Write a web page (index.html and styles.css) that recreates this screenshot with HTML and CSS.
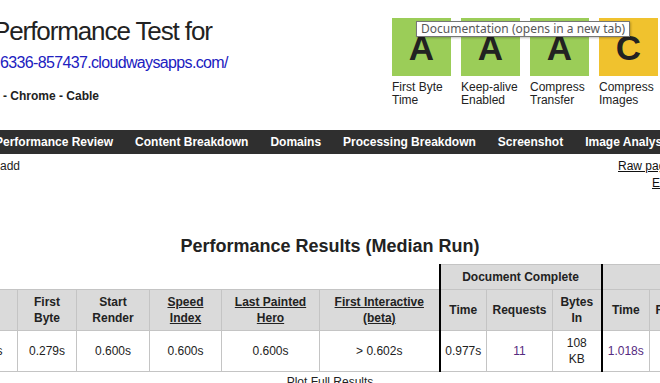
FILE: index.html
```html
<!DOCTYPE html>
<html lang="en">
<head>
    <meta charset="UTF-8">
    <meta name="viewport" content="width=device-width, initial-scale=1.0">
    <title>WebPageTest Test Result</title>
    <link rel="stylesheet" href="styles.css">
</head>
<body>

    <div class="page">
        <div class="header">
            <div class="test-info">
                <h1>Performance Test for</h1>
                <a class="test-url" href="#">6336-857437.cloudwaysapps.com/</a>
                <p class="test-config">- Chrome - Cable</p>
            </div>
            <ul class="grades">
                <li><a class="grade grade-a" href="#">A</a><span>First Byte<br>Time</span></li>
                <li><a class="grade grade-a" href="#">A</a><span>Keep-alive<br>Enabled</span></li>
                <li><a class="grade grade-a" href="#">A</a><span>Compress<br>Transfer</span></li>
                <li><a class="grade grade-c" href="#">C</a><span>Compress<br>Images</span></li>
                <li><a class="grade grade-f" href="#">F</a><span>Cache<br>static content</span></li>
            </ul>
        </div>

        <div class="tooltip">Documentation (opens in a new tab)</div>

        <ul class="nav">
            <li>Performance Review</li>
            <li>Content Breakdown</li>
            <li>Domains</li>
            <li>Processing Breakdown</li>
            <li>Screenshot</li>
            <li>Image Analysis</li>
        </ul>

        <div class="subbar">
            <span>add</span>
            <div class="links">
                <a href="#">Raw page data</a>
                <a class="export" href="#">Export HTTP Archive (.har)</a>
            </div>
        </div>

        <h2>Performance Results (Median Run)</h2>

        <table class="results">
            <colgroup>
                <col style="width:66px"><col style="width:59px"><col style="width:73px">
                <col style="width:72px"><col style="width:98px"><col style="width:120px">
                <col style="width:47px"><col style="width:66px"><col style="width:49px">
                <col style="width:48px"><col style="width:66px"><col style="width:49px">
                <col style="width:60px">
            </colgroup>
            <tr class="group-row">
                <td class="blank" colspan="6"></td>
                <th class="sep" colspan="3">Document Complete</th>
                <th class="sep" colspan="4">Fully Loaded</th>
            </tr>
            <tr class="head-row">
                <th>Load Time</th>
                <th>First Byte</th>
                <th>Start Render</th>
                <th><a href="#">Speed Index</a></th>
                <th><a href="#">Last Painted Hero</a></th>
                <th><a href="#">First Interactive</a> <a href="#">(beta)</a></th>
                <th class="sep">Time</th>
                <th>Requests</th>
                <th>Bytes In</th>
                <th class="sep">Time</th>
                <th>Requests</th>
                <th>Bytes In</th>
                <th>Cost</th>
            </tr>
            <tr class="data-row">
                <td>0.977s</td>
                <td>0.279s</td>
                <td>0.600s</td>
                <td>0.600s</td>
                <td>0.600s</td>
                <td>&gt; 0.602s</td>
                <td class="sep">0.977s</td>
                <td class="visited">11</td>
                <td class="bytes">108 KB</td>
                <td class="sep visited">1.018s</td>
                <td class="visited">12</td>
                <td class="bytes">109 KB</td>
                <td>$----</td>
            </tr>
        </table>

        <p class="plot">Plot Full Results</p>
    </div>

</body>
</html>
```

FILE: styles.css
```css
html, body { overflow: hidden; }
body {
    font-family: "Liberation Sans", Arial, sans-serif;
    margin: 0;
    background: #fff;
    color: #222;
    font-size: 12px;
}
.page { position: relative; }

/* top summary */
.header { display: grid; grid-template-columns: 392px auto; height: 107px; }
.test-info h1 {
    margin: 16px 0 0 -7px;
    font-size: 26px;
    line-height: 30px;
    font-weight: normal;
    letter-spacing: -1.1px;
    white-space: nowrap;
}
.test-url {
    display: block;
    margin-top: 7px;
    font-size: 16px;
    line-height: 20px;
    letter-spacing: -0.65px;
    color: #2020c0;
    text-decoration: none;
    white-space: nowrap;
}
.test-config { margin: 15px 0 0 3px; font-weight: bold; line-height: 16px; }

.grades { display: flex; gap: 10px; list-style: none; margin: 18px 0 0; padding: 0; }
.grades li { width: 59px; flex: none; }
.grade {
    display: block;
    height: 58px;
    line-height: 60px;
    text-align: center;
    font-size: 35px;
    font-weight: bold;
    color: #222;
    text-decoration: none;
}
.grade-a { background: #9bcd58; }
.grade-c { background: #f0c22e; }
.grade-f { background: #e8583c; }
.grades span { display: block; margin-top: 5px; line-height: 13px; white-space: nowrap; }

.tooltip {
    position: absolute;
    left: 416px;
    top: 21px;
    padding: 0 4px;
    border: 1px solid #767676;
    background: #fff;
    box-shadow: 1px 1px 2px rgba(0,0,0,0.25);
    font-family: "Noto Sans", "Open Sans", sans-serif;
    font-size: 12px;
    line-height: 14px;
    color: #575757;
    white-space: nowrap;
}

/* nav bar */
.nav {
    display: flex;
    gap: 22px;
    list-style: none;
    margin: 23px 0 0;
    padding: 0;
    height: 24px;
    background: #2f2f2f;
    color: #fff;
    font-weight: bold;
    line-height: 24px;
    white-space: nowrap;
}
.nav li:first-child { margin-left: -5px; }

.subbar { display: grid; grid-template-columns: 618px auto; margin-top: 4px; line-height: 17px; }
.links a { display: block; color: #111; white-space: nowrap; }
.links .export { margin-left: 34px; }

h2 {
    margin: 43px 0 0;
    text-align: center;
    font-size: 18px;
    line-height: 22px;
    color: #222;
}

/* results table */
.results {
    border-collapse: collapse;
    table-layout: fixed;
    width: 873px;
    margin: 7px 0 0 -49px;
}
.results th, .results td {
    padding: 0 4px;
    border: 1px solid #c4c4c4;
    text-align: center;
    line-height: 16px;
}
.results th { background: #dadada; font-weight: bold; }
.results th a { color: #222; }
.results .blank { border: none; background: none; }
.results .sep { border-left: 2px solid #000; }
.results .bytes { padding: 0 6px; }
.group-row { height: 25px; }
.head-row, .data-row { height: 41px; }
.data-row td { background: #fff; }
.visited { color: #552a80; }
.plot { margin: 3px 0 0; text-align: center; line-height: 14px; }
```
